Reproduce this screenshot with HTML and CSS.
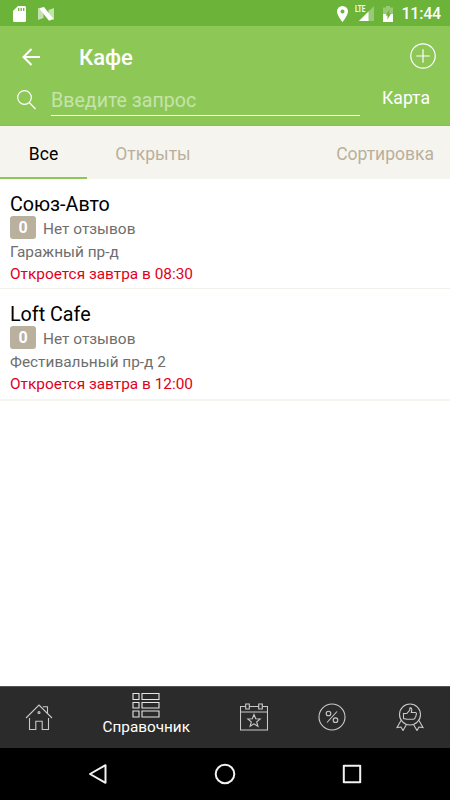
FILE: index.html
```html
<!DOCTYPE html>
<html lang="ru">
<head>
  <meta charset="UTF-8" />
  <meta name="viewport" content="width=device-width, initial-scale=1.0"/>
  <title>Кафе</title>
  <link rel="stylesheet" href="styles.css">
</head>
<body>

  <!-- Status bar -->
  <div class="status-bar">
    <svg class="sd" width="13" height="16" viewBox="0 0 13 16">
      <path d="M5 0h6.500A1.500 1.500 0 0 1 13 1.500v13a1.500 1.500 0 0 1-1.500 1.500h-10A1.500 1.500 0 0 1 0 14.500V5z" fill="#fff"/>
      <path d="M5.700 2v3M8.200 2v3M10.700 2v3" stroke="#6cb33a" stroke-width="1.300"/>
    </svg>
    <svg class="nougat" width="16" height="14" viewBox="0 0 16 14">
      <path d="M0 1l5.500 3v7L0 13zM16 1v12l-5.500-3V3z" fill="#fff" opacity=".6"/>
      <path d="M1 1.200L6 0l9.500 12-4.500 1.800z" fill="#fff"/>
    </svg>
    <svg class="pin" width="11" height="16" viewBox="0 0 11 16">
      <path d="M5.500 0A5.500 5.500 0 0 0 0 5.500C0 9.500 5.500 16 5.500 16S11 9.500 11 5.500A5.500 5.500 0 0 0 5.500 0zm0 3.500a2 2 0 1 1 0 4 2 2 0 0 1 0-4z" fill="#fff"/>
    </svg>
    <div class="signal">
      <span>LTE</span>
      <svg width="15" height="15" viewBox="0 0 15 15">
        <path d="M15 0v15H0z" fill="#fff" opacity=".3"/>
        <path d="M9.500 5.500V15H0z" fill="#fff"/>
      </svg>
    </div>
    <svg class="battery" width="10" height="16" viewBox="0 0 10 16">
      <path d="M3 0h4v1.500h3V8H0V1.500h3z" fill="#fff" opacity=".3"/>
      <path d="M0 8h10v8H0z" fill="#fff"/>
      <path d="M6.500 3.500L2.500 9.500h2v4L8 7.500H6z" fill="#6cb33a"/>
    </svg>
    <span class="clock">11:44</span>
  </div>

  <header>
    <div class="title-row">
      <svg width="18" height="18" viewBox="0 0 18 18" fill="none" stroke="#fff" stroke-width="2">
        <path d="M9.500 1L1.500 9l8 8M1.500 9H18"/>
      </svg>
      <h1>Кафе</h1>
      <svg class="add" width="26" height="26" viewBox="0 0 26 26" fill="none" stroke="#fff" stroke-width="1.200">
        <circle cx="13" cy="13" r="12.200"/>
        <path d="M13 6.200v13.600M6.200 13h13.600"/>
      </svg>
    </div>
    <div class="search-row">
      <svg class="search-icon" width="19" height="20" viewBox="0 0 19 20" fill="none" stroke="#fff" stroke-width="1.200">
        <circle cx="7.500" cy="7.500" r="6.800"/>
        <path d="M12.300 12.500l6.200 6.500"/>
      </svg>
      <div class="search-field">Введите запрос</div>
      <div class="map-link">Карта</div>
    </div>
  </header>

  <div class="tabs">
    <div class="tab active">Все</div>
    <div class="tab">Открыты</div>
    <div class="sort">Сортировка</div>
  </div>

  <main>
    <div class="place">
      <h2>Союз-Авто</h2>
      <div class="reviews"><span class="count">0</span>Нет отзывов</div>
      <div class="address">Гаражный пр-д</div>
      <div class="hours">Откроется завтра в 08:30</div>
    </div>
    <div class="place">
      <h2>Loft Cafe</h2>
      <div class="reviews"><span class="count">0</span>Нет отзывов</div>
      <div class="address">Фестивальный пр-д 2</div>
      <div class="hours">Откроется завтра в 12:00</div>
    </div>
  </main>

  <!-- App navigation -->
  <nav class="app-nav">
    <div class="nav-item">
      <svg width="28" height="28" viewBox="0 0 28 28">
        <path d="M1 15L14 2l13 13M4.500 15v11.500h6.300v-8.300h6.400v8.300h6.300V15M17.800 3.800h4.700v6.400"/>
        <circle cx="14" cy="9.500" r="1"/>
      </svg>
    </div>
    <div class="nav-item current">
      <svg width="28" height="26" viewBox="0 0 28 26">
        <path d="M1 1.500h6v6H1zM10 1.500h17v6H10zM1 10.500h6v5.500H1zM10 10.500h17v5.500H10zM1 19h6v6H1zM10 19h17v6H10z"/>
      </svg>
      <span>Справочник</span>
    </div>
    <div class="nav-item">
      <svg width="28" height="28" viewBox="0 0 28 28">
        <path d="M5.500 3.500h-5v23.500h27V3.500h-5M9.500 3.500h9M.5 9h27M5.700 1h3.600v5H5.700zM18.700 1h3.600v5h-3.600z"/>
        <path d="M14 11.500l1.700 4.300 4.500.2-3.500 2.900 1.200 4.400-3.900-2.500-3.900 2.500 1.200-4.400L7.800 16l4.500-.2z"/>
      </svg>
    </div>
    <div class="nav-item">
      <svg width="28" height="28" viewBox="0 0 28 28">
        <circle cx="14" cy="14" r="13"/>
        <circle cx="10.500" cy="10.500" r="2.300"/>
        <circle cx="17.500" cy="17.200" r="2.300"/>
        <path d="M19 8.500L9 19.500"/>
      </svg>
    </div>
    <div class="nav-item">
      <svg width="28" height="28" viewBox="0 0 28 28">
        <circle cx="14" cy="11.500" r="10.500"/>
        <path d="M5 17.500L1 24.500l4-.5 2 3.500 3.500-6M23 17.500l4 7-4-.5-2 3.500-3.500-6"/>
        <path d="M7.500 10.500h3.300l3-3.500V5c1.900-.5 2.500 1.400 1.500 4.500h4.200c1.500.5 1 1.800.5 2.500.3 1-.2 1.800-.8 2.200 0 1-.7 1.800-1.700 2H11l-3.500-.7z"/>
      </svg>
    </div>
  </nav>

  <!-- Android buttons -->
  <div class="system-nav">
    <svg width="20" height="22" viewBox="0 0 20 22"><path d="M17.500 2.200v17.600L2 11z"/></svg>
    <svg width="22" height="22" viewBox="0 0 22 22"><circle cx="11" cy="11" r="9.300"/></svg>
    <svg width="20" height="20" viewBox="0 0 20 20"><path d="M1.800 1.800h16.400v16.400H1.800z"/></svg>
  </div>

</body>
</html>
```

FILE: styles.css
```css
* {
  box-sizing: border-box;
}

body {
  font-family: Roboto, sans-serif;
  background: #fff;
  margin: 0;
  height: 800px;
  display: flex;
  flex-direction: column;
  overflow: hidden;
}

svg {
  display: block;
  flex-shrink: 0;
}

/* Status bar */
.status-bar {
  height: 26px;
  background: #6cb33a;
  color: #fff;
  display: flex;
  align-items: center;
  padding: 1px 9px 0 13px;
}

.nougat {
  margin-left: 12px;
}

.pin {
  margin-left: auto;
}

.signal {
  position: relative;
  width: 20px;
  margin-left: 6px;
  display: flex;
  justify-content: flex-end;
}

.signal span {
  position: absolute;
  top: 0;
  left: 1px;
  font-size: 9px;
  line-height: 7px;
  font-weight: bold;
  transform: scaleX(0.72);
  transform-origin: left;
}

.battery {
  margin-left: 9px;
}

.clock {
  margin-left: 8px;
  font-size: 16px;
  font-weight: 500;
  letter-spacing: -0.2px;
}

/* Header */
header {
  height: 100px;
  background: #8dc857;
  border-bottom: 1px solid #86bf52;
  color: #fff;
}

.title-row {
  height: 62px;
  display: flex;
  align-items: center;
  padding: 0 14px 0 22px;
}

h1 {
  margin: 1px 0 0 39px;
  font-size: 22px;
  font-weight: 500;
}

.add {
  margin-left: auto;
  margin-bottom: 2px;
}

.search-row {
  height: 28px;
  display: flex;
  align-items: center;
  padding: 0 20px 0 17px;
}

.search-icon {
  margin-bottom: 4px;
}

.search-field {
  width: 309px;
  height: 28px;
  margin-left: 15px;
  border-bottom: 1px solid #fff;
  color: #c6e3ab;
  font-size: 19.6px;
  line-height: 26px;
}

.map-link {
  margin-left: auto;
  margin-bottom: 9px;
  font-size: 17.6px;
}

/* Tabs */
.tabs {
  height: 53px;
  background: #f6f4ef;
  color: #b9b09c;
  display: flex;
  font-size: 17.5px;
  line-height: 56px;
}

.tab {
  width: 132px;
  text-align: center;
}

.tab.active {
  width: 87px;
  color: #000;
  border-bottom: 2px solid #8dc857;
}

.sort {
  margin-left: auto;
  padding-right: 16px;
}

/* List */
main {
  flex: 1;
}

.place {
  height: 110px;
  padding: 12px 10px 0;
  border-bottom: 1px solid #f2f0eb;
  color: #6e6e6e;
  font-size: 15.4px;
}

.place:last-child {
  height: 112px;
  border-bottom: 2px solid #f6f4ef;
}

h2 {
  margin: 0;
  color: #000;
  font-size: 19.7px;
  font-weight: 400;
  line-height: 28px;
  height: 25px;
}

.reviews {
  height: 23px;
  display: flex;
  gap: 7px;
  line-height: 27px;
}

.count {
  width: 26px;
  height: 23px;
  border-radius: 3px;
  background: #b9b09e;
  color: #fff;
  font-size: 16px;
  font-weight: bold;
  line-height: 24px;
  text-align: center;
}

.address {
  height: 24px;
  line-height: 27px;
}

.hours {
  color: #e2001a;
  line-height: 22px;
}

/* Bottom navigation */
.app-nav {
  height: 62px;
  background: #2b2b2b;
  border-top: 1px solid #555;
  display: flex;
}

.nav-item {
  width: 78px;
  padding-bottom: 1px;
  display: flex;
  flex-direction: column;
  align-items: center;
  justify-content: center;
}

.nav-item svg {
  fill: none;
  stroke: #c9c9c9;
  stroke-width: 1.1;
}

.nav-item.current {
  width: 136.5px;
  padding-bottom: 7px;
  color: #fff;
  font-size: 15.3px;
  line-height: 18px;
}

.nav-item.current svg {
  stroke: #e6e6e6;
}

.system-nav {
  height: 52px;
  background: #000;
  display: flex;
  align-items: center;
  justify-content: center;
  gap: 106px;
}

.system-nav svg {
  fill: none;
  stroke: #f2f2f2;
  stroke-width: 2;
  stroke-linejoin: round;
}
```
